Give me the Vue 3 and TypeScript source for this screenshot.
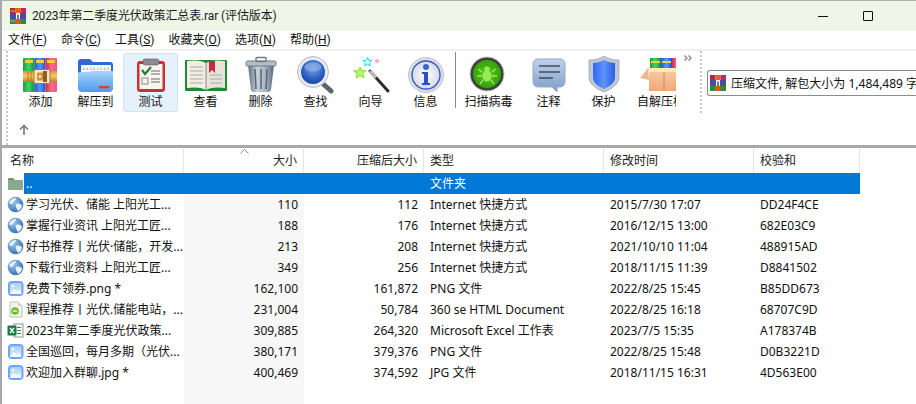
<script setup lang="ts">
interface Tool { label: string; icon: string; active?: boolean }
interface Row { icon: string; name: string; size: string; packed: string; type: string; time: string; crc: string; selected?: boolean }

const menus = [
  { text: '文件', key: 'F' }, { text: '命令', key: 'C' }, { text: '工具', key: 'S' },
  { text: '收藏夹', key: 'O' }, { text: '选项', key: 'N' }, { text: '帮助', key: 'H' },
]
const toolsA: Tool[] = [
  { label: '添加', icon: 'add' }, { label: '解压到', icon: 'extract' },
  { label: '测试', icon: 'test', active: true }, { label: '查看', icon: 'view' },
  { label: '删除', icon: 'delete' }, { label: '查找', icon: 'find' },
  { label: '向导', icon: 'wizard' }, { label: '信息', icon: 'info' },
]
const toolsB: Tool[] = [
  { label: '扫描病毒', icon: 'virus' }, { label: '注释', icon: 'comment' },
  { label: '保护', icon: 'protect' }, { label: '自解压格式', icon: 'sfx' },
]
const inet = 'Internet 快捷方式'
const rows: Row[] = [
  { icon: 'folder', name: '..', size: '', packed: '', type: '文件夹', time: '', crc: '', selected: true },
  { icon: 'globe', name: '学习光伏、储能 上阳光工...', size: '110', packed: '112', type: inet, time: '2015/7/30 17:07', crc: 'DD24F4CE' },
  { icon: 'globe', name: '掌握行业资讯 上阳光工匠...', size: '188', packed: '176', type: inet, time: '2016/12/15 13:00', crc: '682E03C9' },
  { icon: 'globe', name: '好书推荐丨光伏·储能，开发...', size: '213', packed: '208', type: inet, time: '2021/10/10 11:04', crc: '488915AD' },
  { icon: 'globe', name: '下载行业资料 上阳光工匠...', size: '349', packed: '256', type: inet, time: '2018/11/15 11:39', crc: 'D8841502' },
  { icon: 'image', name: '免费下领券.png *', size: '162,100', packed: '161,872', type: 'PNG 文件', time: '2022/8/25 15:45', crc: 'B85DD673' },
  { icon: 'html', name: '课程推荐丨光伏.储能电站，...', size: '231,004', packed: '50,784', type: '360 se HTML Document', time: '2022/8/25 16:18', crc: '68707C9D' },
  { icon: 'excel', name: '2023年第二季度光伏政策...', size: '309,885', packed: '264,320', type: 'Microsoft Excel 工作表', time: '2023/7/5 15:35', crc: 'A178374B' },
  { icon: 'image', name: '全国巡回，每月多期（光伏...', size: '380,171', packed: '379,376', type: 'PNG 文件', time: '2022/8/25 15:48', crc: 'D0B3221D' },
  { icon: 'image', name: '欢迎加入群聊.jpg *', size: '400,469', packed: '374,592', type: 'JPG 文件', time: '2018/11/15 16:31', crc: '4D563E00' },
]
</script>

<template>
  <div class="window">
    <svg class="defs" width="0" height="0" aria-hidden="true">
      <defs>
        <linearGradient id="gGreen" x1="0" x2="1" y1="0" y2="0"><stop offset="0" stop-color="#14a044" /><stop offset=".5" stop-color="#48d068" /><stop offset="1" stop-color="#109038" /></linearGradient>
        <linearGradient id="gBlue" x1="0" x2="1" y1="0" y2="0"><stop offset="0" stop-color="#2058d0" /><stop offset=".5" stop-color="#5898f8" /><stop offset="1" stop-color="#2050c4" /></linearGradient>
        <linearGradient id="gRed" x1="0" x2="1" y1="0" y2="0"><stop offset="0" stop-color="#d82444" /><stop offset=".5" stop-color="#fa6c88" /><stop offset="1" stop-color="#ec5490" /></linearGradient>
        <linearGradient id="gBelt" x1="0" x2="0" y1="0" y2="1"><stop offset="0" stop-color="#e09a34" /><stop offset=".45" stop-color="#f8c868" /><stop offset="1" stop-color="#c87c1c" /></linearGradient>
        <linearGradient id="gFolder" x1="0" x2="0" y1="0" y2="1"><stop offset="0" stop-color="#a8d4fa" /><stop offset="1" stop-color="#4c9aec" /></linearGradient>
        <linearGradient id="gSteel" x1="0" x2="1" y1="0" y2="0"><stop offset="0" stop-color="#5c6c80" /><stop offset=".35" stop-color="#c8d2dc" /><stop offset=".7" stop-color="#a4b0bc" /><stop offset="1" stop-color="#56647a" /></linearGradient>
        <radialGradient id="gLens" cx=".5" cy=".35" r=".7"><stop offset="0" stop-color="#7ba4e8" /><stop offset=".6" stop-color="#2f62c4" /><stop offset="1" stop-color="#16409a" /></radialGradient>
        <radialGradient id="gInfo" cx=".5" cy=".5" r=".6"><stop offset="0" stop-color="#ffffff" /><stop offset="1" stop-color="#ccd2e0" /></radialGradient>
        <radialGradient id="gBug" cx=".5" cy=".5" r=".55"><stop offset="0" stop-color="#62d418" /><stop offset="1" stop-color="#2f9a0a" /></radialGradient>
        <linearGradient id="gBubble" x1="0" x2="0" y1="0" y2="1"><stop offset="0" stop-color="#c0d2ea" /><stop offset="1" stop-color="#7e9cc6" /></linearGradient>
        <linearGradient id="gShield" x1="0" x2="1" y1="0" y2="0"><stop offset="0" stop-color="#2f68f2" /><stop offset=".5" stop-color="#5f92fb" /><stop offset="1" stop-color="#2a5ce4" /></linearGradient>
        <linearGradient id="gBox" x1="0" x2="0" y1="0" y2="1"><stop offset="0" stop-color="#f6c8a0" /><stop offset="1" stop-color="#f0a878" /></linearGradient>
        <radialGradient id="gGlobe" cx=".35" cy=".3" r=".8"><stop offset="0" stop-color="#a0c8ec" /><stop offset="1" stop-color="#2a68a8" /></radialGradient>
        <linearGradient id="gImg" x1="0" x2="0" y1="0" y2="1"><stop offset="0" stop-color="#a8cff8" /><stop offset="1" stop-color="#e2eefc" /></linearGradient>
      </defs>
    </svg>

    <header class="title">
      <svg class="title-icon" width="16" height="16" viewBox="0 0 16 16">
        <rect x="0" y="0" width="5.5" height="16" fill="#b9234a" />
        <rect x="5.5" y="0" width="5" height="16" fill="#e0641c" />
        <rect x="10.5" y="0" width="5.5" height="16" fill="#c02a58" />
        <rect x="0" y="5" width="16" height="6" fill="#4a4aa8" />
        <rect x="0" y="11" width="5.5" height="5" fill="#2d8a3e" />
        <rect x="5.5" y="11" width="5" height="5" fill="#d85a1a" />
        <rect x="10.5" y="11" width="5.5" height="5" fill="#2d8a3e" />
        <path d="M6 5h4v6h-1.2V6.5H7.2V11H6z" fill="#fff" />
        <rect x="1" y="12.5" width="3.5" height="1" fill="#e8c83c" />
        <rect x="1" y="2.5" width="3.5" height="1" fill="#e8c83c" />
      </svg>
      <span class="title-text">2023年第二季度光伏政策汇总表.rar (评估版本)</span>
      <span class="win-btn min"><i></i></span>
      <span class="win-btn max"><i></i></span>
    </header>

    <nav class="menu">
      <span v-for="m in menus" :key="m.key" class="menu-item">{{ m.text }}(<u>{{ m.key }}</u>)</span>
    </nav>

    <section class="toolbar">
      <div class="grip"></div>
      <div class="tool-col">
        <div class="tools">
          <template v-for="(group, gi) in [toolsA, toolsB]" :key="gi">
            <div v-if="gi === 1" class="tool-sep"></div>
            <div class="tool-group">
              <div v-for="t in group" :key="t.icon" class="tool" :class="[{ active: t.active }, 'tool-' + t.icon]">
                <svg class="tool-icon" width="44" height="38" viewBox="0 0 44 38">
                  <g v-if="t.icon === 'add'">
                    <rect x="4" y="2" width="11.5" height="34" rx="1" fill="url(#gGreen)" />
                    <rect x="15.5" y="2" width="11" height="34" fill="url(#gBlue)" />
                    <rect x="26.5" y="2" width="11.5" height="34" rx="1" fill="url(#gRed)" />
                    <rect x="6" y="4" width="8" height="3" fill="#f0d040" /><rect x="17" y="4" width="8" height="3" fill="#f0d040" /><rect x="28" y="4" width="8" height="3" fill="#f0d040" />
                    <rect x="4" y="15" width="34" height="11" fill="url(#gBelt)" />
                    <path d="M9 15v11M12 15v11" stroke="#a86a18" stroke-width=".8" />
                    <rect x="15" y="13.5" width="16" height="14" rx="1.5" fill="#f8e8c8" stroke="#a8762c" />
                    <rect x="18" y="16.5" width="10" height="8" fill="#d8942c" />
                    <rect x="24" y="15" width="4" height="11" fill="#8c5e22" />
                    <circle cx="21" cy="20.5" r="1.3" fill="#f8f0e0" />
                  </g>
                  <g v-else-if="t.icon === 'extract'">
                    <path d="M4 6a3 3 0 0 1 3-3h9l3 3h17a3 3 0 0 1 3 3v8H4z" fill="#2a6cd4" />
                    <rect x="7" y="9" width="30" height="12" fill="#f2f6fb" />
                    <path d="M9 13h26" stroke="#9cb0c8" stroke-width="1.4" stroke-dasharray="1.5 2" />
                    <path d="M4 18a2 2 0 0 1 2-2h10l2-1h21v17a4 4 0 0 1-4 4H8a4 4 0 0 1-4-4z" fill="url(#gFolder)" />
                    <rect x="25" y="30" width="10" height="2.4" fill="#e03c28" />
                  </g>
                  <g v-else-if="t.icon === 'test'">
                    <rect x="8" y="5" width="28" height="31" rx="3" fill="#cc3034" />
                    <rect x="10.5" y="8" width="23" height="25" fill="#f8f4ee" />
                    <rect x="14" y="3" width="16" height="6" rx="2" fill="#8c8c90" stroke="#5c5c60" stroke-width=".6" />
                    <path d="M13 14l3 4 6-7" fill="none" stroke="#1f7d3a" stroke-width="2.2" />
                    <rect x="13" y="22" width="6" height="6" fill="none" stroke="#8a8a8a" />
                    <path d="M22 15h9M22 18h9M22 23h9M22 26h9" stroke="#6a6a6a" stroke-width="1.2" />
                  </g>
                  <g v-else-if="t.icon === 'view'">
                    <rect x="1" y="4" width="42" height="31" rx="1" fill="#1f8a32" />
                    <path d="M3 5c7-1 14-1 19 2v27c-5-3-12-3-19-2z" fill="#f1eee6" />
                    <path d="M41 5c-7-1-14-1-19 2v27c5-3 12-3 19-2z" fill="#e6e3da" />
                    <path d="M6 11h13M6 15h13M6 19h13M6 23h13M6 27h13M26 19h12M26 23h12M26 27h12" stroke="#a8a8a4" />
                    <path d="M25 5h6v12l-3-3-3 3z" fill="#c82840" />
                    <path d="M22 7v27" stroke="#8a8a80" />
                  </g>
                  <g v-else-if="t.icon === 'delete'">
                    <path d="M9 9h26l-3 25a3 3 0 0 1-3 2H15a3 3 0 0 1-3-2z" fill="url(#gSteel)" />
                    <path d="M16 13l1 20M22 13v20M28 13l-1 20" stroke="#5c6a7c" stroke-width="1.6" />
                    <rect x="7" y="5" width="30" height="5" rx="1.5" fill="#b4bec8" stroke="#6c7a88" />
                    <rect x="17" y="1.5" width="10" height="4" rx="1" fill="none" stroke="#6c7a88" stroke-width="1.4" />
                  </g>
                  <g v-else-if="t.icon === 'find'">
                    <path d="M27 26l10 9" stroke="#5e6468" stroke-width="5" stroke-linecap="round" />
                    <circle cx="19" cy="16" r="15.5" fill="#e6eaee" stroke="#b4bcc4" />
                    <circle cx="19" cy="16" r="12" fill="url(#gLens)" />
                    <ellipse cx="19" cy="11" rx="8.5" ry="4.5" fill="#8fb0ea" opacity=".65" />
                  </g>
                  <g v-else-if="t.icon === 'wizard'">
                    <path d="M21 15l18 20" stroke="#2c2c2c" stroke-width="3" stroke-linecap="round" />
                    <path d="M21 15l6 6.6" stroke="#bdbdbd" stroke-width="3" />
                    <path d="M11 11l1.6 3.4 4.4.2-3.2 3 1.2 4.4-4-2.2-3.8 2.4.8-4.4-3.4-2.8 4.4-.6z" fill="#b8f46c" stroke="#8cdc3c" />
                    <path d="M18.5 1.5l1.3 2.8 3 .3-2.2 2.1.7 3-2.8-1.5-2.6 1.6.5-3-2.3-2.1 3-.4z" fill="#e0fcff" stroke="#20d4f0" />
                    <path d="M28 2l.9 1.9 2.1.2-1.5 1.4.4 2.1-1.9-1-1.8 1 .4-2.1-1.5-1.4 2.1-.2z" fill="#f6a8b4" />
                  </g>
                  <g v-else-if="t.icon === 'info'">
                    <circle cx="22" cy="19" r="17.5" fill="#d8dde4" stroke="#c0c6d0" />
                    <circle cx="22" cy="19" r="14" fill="url(#gInfo)" stroke="#3c5cc4" stroke-width="1.4" />
                    <circle cx="22" cy="11" r="3" fill="#3c64d0" />
                    <path d="M18 16h6v11h2v2h-8v-2h2v-9h-2z" fill="#2a4cd0" />
                  </g>
                  <g v-else-if="t.icon === 'virus'">
                    <circle cx="20" cy="18" r="17" fill="#3e403e" stroke="#c4c8c4" />
                    <circle cx="20" cy="18" r="14" fill="url(#gBug)" />
                    <circle cx="20" cy="18" r="9.5" fill="none" stroke="#3aa80e" />
                    <path d="M20 4v6M20 26v6M6 18h6M28 18h6" stroke="#3aa80e" />
                    <ellipse cx="20" cy="20" rx="4.5" ry="5.5" fill="#9ae85c" />
                    <circle cx="20" cy="13" r="2.6" fill="#9ae85c" />
                    <path d="M15 16l-4-3M25 16l4-3M15 20h-5M25 20h5M16 24l-3 4M24 24l3 4" stroke="#9ae85c" stroke-width="1.3" />
                  </g>
                  <g v-else-if="t.icon === 'comment'">
                    <path d="M11 3h22a5 5 0 0 1 5 5v18a5 5 0 0 1-5 5h-3v5l-5-5H11a5 5 0 0 1-5-5V8a5 5 0 0 1 5-5z" fill="url(#gBubble)" stroke="#93aacb" />
                    <path d="M12 10h21M12 16h21M12 22h14" stroke="#3f4c60" stroke-width="1.6" />
                  </g>
                  <g v-else-if="t.icon === 'protect'">
                    <path d="M22 0c5 3 10 4 15 4v17c0 7-7 12-15 15C14 33 7 28 7 21V4c5 0 10-1 15-4z" fill="#c0c8d2" stroke="#8c96a8" stroke-width=".6" />
                    <path d="M22 4c4 2 7 3 11 3v14c0 6-5 9-11 12-6-3-11-6-11-12V7c4 0 7-1 11-3z" fill="url(#gShield)" />
                  </g>
                  <g v-else-if="t.icon === 'sfx'">
                    <rect x="13" y="2" width="11" height="14" fill="url(#gGreen)" />
                    <rect x="24" y="2" width="11" height="14" fill="url(#gBlue)" />
                    <rect x="35" y="2" width="9" height="14" fill="url(#gRed)" />
                    <rect x="14" y="5" width="9" height="2" fill="#f0d040" /><rect x="25" y="5" width="9" height="2" fill="#f0d040" />
                    <rect x="11" y="12" width="33" height="4" fill="#fbeab0" />
                    <path d="M11 12L3 22l9 2z" fill="#e8b890" />
                    <rect x="12" y="16" width="32" height="19" fill="url(#gBox)" />
                    <path d="M27 16v19" stroke="#cc8a58" />
                  </g>
                </svg>
                <span class="tool-label">{{ t.label }}</span>
              </div>
            </div>
          </template>
          <svg class="chevrons" width="9" height="6" viewBox="0 0 9 6"><path d="M.5.5L3 3 .5 5.5M4.5.5L7 3 4.5 5.5" fill="none" stroke="#7a7aa0" stroke-width="1.2" /></svg>
        </div>
        <div class="path-row">
          <svg width="12" height="12" viewBox="0 0 12 12"><path d="M6 11V2M2 5.5L6 1.5l4 4" fill="none" stroke="#7c7c7c" stroke-width="1.7" /></svg>
        </div>
      </div>
      <div class="grip right"></div>
      <div class="info-wrap">
        <div class="info-box">
          <svg width="16" height="16" viewBox="0 0 16 16">
            <rect x="0" y="0" width="5.5" height="16" fill="#b9234a" />
            <rect x="5.5" y="0" width="5" height="16" fill="#e0641c" />
            <rect x="10.5" y="0" width="5.5" height="16" fill="#c02a58" />
            <rect x="0" y="5" width="16" height="6" fill="#4a4aa8" />
            <rect x="0" y="11" width="5.5" height="5" fill="#2d8a3e" />
            <rect x="5.5" y="11" width="5" height="5" fill="#d85a1a" />
            <rect x="10.5" y="11" width="5.5" height="5" fill="#2d8a3e" />
            <path d="M6 5h4v6h-1.2V6.5H7.2V11H6z" fill="#fff" />
          </svg>
          <span class="info-text">压缩文件, 解包大小为 1,484,489 字节</span>
        </div>
      </div>
    </section>

    <main class="list">
      <div class="head">
        <span class="h-name">名称</span>
        <span class="h-cell right sorted">大小<svg class="caret" width="9" height="5" viewBox="0 0 9 5"><path d="M.5 4.5l4-4 4 4" fill="none" stroke="#8a8a8a" /></svg></span>
        <span class="h-cell right">压缩后大小</span>
        <span class="h-cell">类型</span>
        <span class="h-cell">修改时间</span>
        <span class="h-cell">校验和</span>
      </div>
      <div v-for="r in rows" :key="r.crc + r.name" class="row" :class="{ selected: r.selected }">
        <span class="file-icon">
          <svg width="17" height="17" viewBox="0 0 17 17">
            <g v-if="r.icon === 'folder'">
              <path d="M1 4a1 1 0 0 1 1-1h4l2 2h7a1 1 0 0 1 1 1v8a1 1 0 0 1-1 1H2a1 1 0 0 1-1-1z" fill="#8aa98e" />
              <path d="M1 3.5h5l1.5 1.5H1z" fill="#7c8a5c" />
            </g>
            <g v-else-if="r.icon === 'globe'">
              <circle cx="8.5" cy="8.5" r="7.8" fill="url(#gGlobe)" />
              <path d="M3 5c2-2 4-3 6-3 1 1-1 2-2 3s-1 3-3 3-2-1-1-3zM9 8c2-1 4 0 6 1 0 3-2 5-4 6-1-2-3-5-2-7z" fill="#e8f2fa" />
            </g>
            <g v-else-if="r.icon === 'image'">
              <rect x="1" y="1" width="15.5" height="15" rx="4" fill="#6ea6f0" />
              <rect x="3" y="3" width="11.5" height="11" rx="1.5" fill="url(#gImg)" />
              <path d="M3 14l4-5 3 3 2-2 2.5 4z" fill="#ffffff" />
              <circle cx="6" cy="6" r="1.2" fill="#ffffff" />
            </g>
            <g v-else-if="r.icon === 'html'">
              <path d="M3 1h8l4 4v11H3z" fill="#f4f4f0" stroke="#c0c0b8" />
              <path d="M11 1v4h4z" fill="#d8d8d0" />
              <circle cx="8" cy="10" r="3.8" fill="#6cbc34" />
              <path d="M6 10h4" stroke="#fff" stroke-width="1.3" />
            </g>
            <g v-else-if="r.icon === 'excel'">
              <rect x="7" y="2" width="9" height="13" fill="#fafafa" stroke="#8a9a8a" />
              <path d="M10 5.5h4M10 8.5h4M10 11.5h4" stroke="#2a8a54" />
              <rect x="0.5" y="3.5" width="9" height="10" rx="1" fill="#1c7a44" />
              <path d="M3 6l4 5M7 6l-4 5" stroke="#fff" stroke-width="1.3" />
            </g>
          </svg>
        </span>
        <div class="cells">
          <span class="c-name">{{ r.name }}</span>
          <span class="c-num sorted">{{ r.size }}</span>
          <span class="c-num">{{ r.packed }}</span>
          <span class="c-text">{{ r.type }}</span>
          <span class="c-text">{{ r.time }}</span>
          <span class="c-text">{{ r.crc }}</span>
        </div>
      </div>
      <div class="filler"><span></span></div>
    </main>
  </div>
</template>

<style>
html, body { margin: 0; padding: 0; background: #fff; overflow: hidden; }
</style>

<style scoped>
.window {
  position: relative;
  width: 916px;
  height: 404px;
  overflow: hidden;
  display: flex;
  flex-direction: column;
  background: #fff;
  font: 12px/16px Roboto, "Noto Sans CJK SC", sans-serif;
  color: #111;
  box-sizing: border-box;
  border-top: 1px solid #b0b0b0;
  border-left: 2px solid #a8a8a8;
}
.defs { position: absolute; }
.title {
  flex: 0 0 30px;
  display: flex;
  align-items: center;
  background: #eff5e7;
  margin-left: -2px;
  padding-left: 10px;
}
.title-icon { flex: none; margin-bottom: 1px; }
.title-text { margin-left: 6px; flex: 1; color: #1c1c1c; margin-bottom: 1px; letter-spacing: -0.12px; }
.win-btn { flex: none; width: 45px; display: flex; justify-content: center; align-items: center; }
.win-btn.min i { display: block; width: 10px; height: 1px; background: #111; }
.win-btn.max { margin-right: 26px; margin-bottom: 1px; }
.win-btn.max i { display: block; width: 8px; height: 8px; border: 1px solid #111; border-radius: 1px; }
.menu {
  flex: 0 0 18px;
  display: flex;
  align-items: center;
  gap: 14px;
  padding-left: 6px;
}
.menu-item { white-space: nowrap; }
.menu-item u { text-underline-offset: 1px; }
.toolbar {
  flex: none;
  height: 94px;
  display: flex;
  border-top: 2px solid #f0f0f0;
  border-bottom: 3px solid #a9a9a9;
  box-sizing: content-box;
}
.grip { flex: none; width: 2px; margin-left: 4px; background: repeating-linear-gradient(#c8c8c8 0 2px, transparent 2px 4px); }
.grip.right { height: 63px; margin-left: 0; }
.tool-col { flex: 0 0 692px; display: flex; flex-direction: column; }
.tools { display: flex; position: relative; height: 63px; padding-left: 5px; }
.tool-group { display: flex; }
.tool {
  width: 55px;
  height: 59px;
  box-sizing: border-box;
  display: flex;
  flex-direction: column;
  align-items: center;
  overflow: hidden;
  margin-top: 2px;
  border-radius: 3px;
  border: 1px solid transparent;
}
.tool.active { background: #e5f1fb; border-color: #cfe4f6; }
.tool-icon { flex: none; margin-top: 2px; }
.tool-label { line-height: 16px; white-space: nowrap; }
.tool-virus { width: 65px; }
.tool-sfx { width: 45px; border: 0; padding: 1px 0 0 6px; align-items: flex-start; border-radius: 0; }
.tool-sep { flex: none; width: 1px; height: 56px; margin: 1px 0 0 2px; background: #8a8a8a; }
.chevrons { position: absolute; left: 676px; top: 4px; }
.path-row { padding: 10px 0 0 10px; display: flex; }
.info-wrap { flex: 1; min-width: 0; padding: 19px 0 0 5px; overflow: hidden; }
.info-box {
  height: 26px;
  box-sizing: border-box;
  display: flex;
  align-items: center;
  gap: 5px;
  padding-left: 2px;
  border: 1px solid #8c8c8c;
  border-right: 0;
  border-radius: 3px 0 0 3px;
  white-space: nowrap;
  width: 240px;
  font-family: "Noto Sans", "Noto Sans CJK SC", sans-serif;
  color: #111;
}
.info-text { padding-top: 1px; }
.list { flex: 1; min-height: 0; display: flex; flex-direction: column; }
.head {
  flex: none;
  height: 25px;
  display: grid;
  grid-template-columns: 182px 120px 120px 180px 150px 106px;
  align-items: stretch;
}
.h-name, .h-cell {
  display: flex;
  align-items: center;
  border-right: 1px solid #e5e5e5;
  padding: 0 6px;
  position: relative;
  color: #222;
}
.h-name { padding-left: 8px; }
.h-cell.right { justify-content: flex-end; }
.caret { position: absolute; left: 56px; top: 1px; }
.row { flex: none; height: 21px; display: flex; }
.file-icon { flex: none; width: 22px; padding-left: 5px; box-sizing: border-box; height: 21px; display: flex; align-items: center; }
.cells {
  display: grid;
  grid-template-columns: 160px 120px 120px 180px 150px 106px;
  line-height: 21px;
  white-space: nowrap;
  font-family: "Noto Sans", "Noto Sans CJK SC", sans-serif;
}
.cells > span { height: 21px; box-sizing: border-box; }
.c-name { padding-left: 2px; overflow: hidden; }
.c-num { text-align: right; padding-right: 6px; }
.c-text { padding-left: 6px; }
.sorted.c-num { background: #f7f7f7; }
.selected .cells { background: #0078d7; color: #fff; }
.selected .sorted.c-num { background: transparent; }
.filler {
  flex: 1;
  display: grid;
  grid-template-columns: 182px 120px;
}
.filler span { grid-column: 2; background: #f7f7f7; }
</style>
